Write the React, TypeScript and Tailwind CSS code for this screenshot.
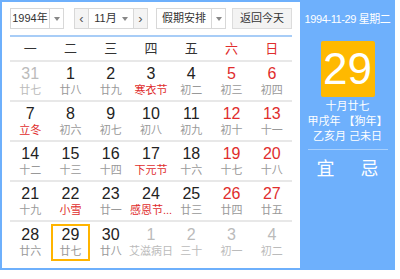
import React from "react";

type Cell = { d: number; l: string; other?: boolean; red?: boolean; hol?: boolean; today?: boolean };

const rows: Cell[][] = [
  [
    { d: 31, l: "廿七", other: true },
    { d: 1, l: "廿八" },
    { d: 2, l: "廿九" },
    { d: 3, l: "寒衣节", hol: true },
    { d: 4, l: "初二" },
    { d: 5, l: "初三", red: true },
    { d: 6, l: "初四", red: true },
  ],
  [
    { d: 7, l: "立冬", hol: true },
    { d: 8, l: "初六" },
    { d: 9, l: "初七" },
    { d: 10, l: "初八" },
    { d: 11, l: "初九" },
    { d: 12, l: "初十", red: true },
    { d: 13, l: "十一", red: true },
  ],
  [
    { d: 14, l: "十二" },
    { d: 15, l: "十三" },
    { d: 16, l: "十四" },
    { d: 17, l: "下元节", hol: true },
    { d: 18, l: "十六" },
    { d: 19, l: "十七", red: true },
    { d: 20, l: "十八", red: true },
  ],
  [
    { d: 21, l: "十九" },
    { d: 22, l: "小雪", hol: true },
    { d: 23, l: "廿一" },
    { d: 24, l: "感恩节...", hol: true },
    { d: 25, l: "廿三" },
    { d: 26, l: "廿四", red: true },
    { d: 27, l: "廿五", red: true },
  ],
  [
    { d: 28, l: "廿六" },
    { d: 29, l: "廿七", today: true },
    { d: 30, l: "廿八" },
    { d: 1, l: "艾滋病日", other: true },
    { d: 2, l: "三十", other: true },
    { d: 3, l: "初一", other: true },
    { d: 4, l: "初二", other: true },
  ],
];

const weekdays = ["一", "二", "三", "四", "五", "六", "日"];

function Caret() {
  return <span className="inline-block w-0 h-0 border-l-[3px] border-r-[3px] border-t-[4px] border-l-transparent border-r-transparent border-t-[#888]" />;
}

export default function App() {
  return (
    <div className="w-[400px] h-[279px] bg-white" style={{ fontFamily: '"Liberation Sans", "Noto Sans CJK SC", sans-serif' }}>
      <div className="flex w-[395px] h-[270px] border-2 border-[#6eb0fc] border-r-0">
        {/* 左侧日历 */}
        <div className="w-[298px] pl-[8px] pt-[6px]">
          <div className="flex items-center h-[21px] text-[11px] text-[#333] whitespace-nowrap">
            <div className="flex h-[21px] w-[54px] border border-[#d8d8d8]">
              <span className="flex-1 flex items-center justify-center">1994年</span>
              <span className="w-[14px] border-l border-[#d8d8d8] flex items-center justify-center"><Caret /></span>
            </div>
            <div className="flex h-[21px] w-[74px] ml-[10px] border border-[#d8d8d8]">
              <span className="w-[14px] bg-[#f4f4f4] border-r border-[#d8d8d8] flex items-center justify-center text-[#555] text-[13px]">‹</span>
              <span className="flex-1 flex items-center justify-center gap-[5px]">11月 <Caret /></span>
              <span className="w-[14px] bg-[#f4f4f4] border-l border-[#d8d8d8] flex items-center justify-center text-[#555] text-[13px]">›</span>
            </div>
            <div className="flex h-[21px] w-[70px] ml-[8px] border border-[#d8d8d8]">
              <span className="flex-1 flex items-center justify-center">假期安排</span>
              <span className="w-[14px] border-l border-[#d8d8d8] flex items-center justify-center"><Caret /></span>
            </div>
            <div className="h-[21px] w-[60px] ml-[6px] border border-[#dcdcdc] bg-[#f3f3f3] flex items-center justify-center">返回今天</div>
          </div>
          <div className="mt-[6px] w-[282px] h-[2px] bg-[#a8cdf7]" />
          <div className="grid grid-cols-7 w-[282px] h-[25px] items-center text-[13px] text-[#333] border-b-2 border-[#e8e8e8]">
            {weekdays.map((w, i) => (
              <span key={w} className={`text-center ${i >= 5 ? "text-[#e02d2d]" : ""}`}>{w}</span>
            ))}
          </div>
          {rows.map((r, ri) => (
            <div key={ri} className={`grid grid-cols-7 w-[282px] h-[40px] items-center ${ri < 4 ? "border-b-2 border-[#e8e8e8]" : ""}`}>
              {r.map((c, ci) => (
                <div key={ci} className="flex justify-center">
                  <div className={`flex flex-col items-center justify-center w-[39px] h-[37px] pt-[1px] ${c.today ? "border-2 border-[#ffb400]" : ""}`}>
                    <span className={`text-[16px] leading-[18px] ${c.other ? "text-[#bbb]" : c.red ? "text-[#e02d2d]" : "text-[#222]"}`}>{c.d}</span>
                    <span className={`text-[11px] leading-[15px] whitespace-nowrap ${c.hol && !c.other ? "text-[#e02d2d]" : c.other ? "text-[#bbb]" : "text-[#999]"}`}>{c.l}</span>
                  </div>
                </div>
              ))}
            </div>
          ))}
        </div>
        {/* 右侧信息 */}
        <div className="flex-1 bg-[#6eb0fc] text-white flex flex-col items-center">
          <div className="mt-[9px] text-[11px] tracking-[-0.4px] whitespace-nowrap">1994-11-29 星期二</div>
          <div className="mt-[13px] w-[54px] h-[56px] bg-[#ffb900] rounded-[2px] flex items-center justify-center text-[44px] leading-none">29</div>
          <div className="mt-[2px] text-[11px] leading-[15px] text-center whitespace-nowrap">
            <div>十月廿七</div>
            <div>甲戌年 【狗年】</div>
            <div>乙亥月 己未日</div>
          </div>
          <div className="mt-[5px] w-[80px] h-[1px] bg-[#a8d0fd]" />
          <div className="mt-[10px] flex gap-[26px] text-[18px] leading-none">
            <span>宜</span>
            <span>忌</span>
          </div>
        </div>
      </div>
    </div>
  );
}
